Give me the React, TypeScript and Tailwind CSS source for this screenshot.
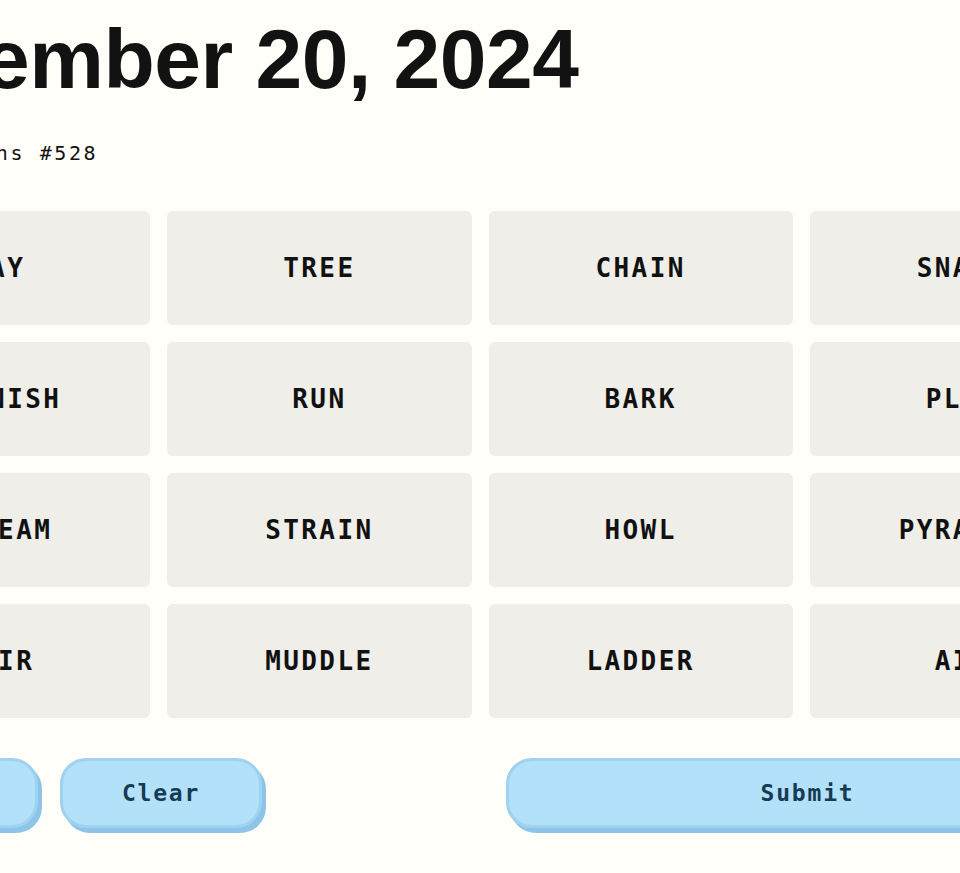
const words = [
  "BAY", "TREE", "CHAIN", "SNARL",
  "GARNISH", "RUN", "BARK", "PLAY",
  "STREAM", "STRAIN", "HOWL", "PYRAMID",
  "STIR", "MUDDLE", "LADDER", "AIR",
];

function PillButton({ label, className }: { label: string; className: string }) {
  return (
    <button
      className={`h-[70px] shrink-0 rounded-[26px] border-[3px] border-[#9fd1f0] bg-[#b3e1fa] shadow-[4px_5px_0_#8dc5e8] text-[23px] font-bold tracking-[1.8px] text-[#173a55] ${className}`}
      style={{ fontFamily: '"DejaVu Sans Mono", "Liberation Mono", monospace' }}
    >
      {label}
    </button>
  );
}

export default function App() {
  return (
    <div className="min-h-screen w-full overflow-hidden bg-[#fffef8] flex justify-center">
      <div className="w-[1268px] shrink-0 flex flex-col pt-[17px]">
        <h1
          className="text-[84px] leading-none font-bold tracking-[-0.5px] text-[#121212] -ml-[43px] whitespace-nowrap"
          style={{ fontFamily: '"Liberation Sans", Arial, sans-serif' }}
        >
          September 20, 2024
        </h1>
        <p
          className="mt-[40px] ml-[18px] text-[20px] leading-6 tracking-[2.6px] text-[#121212]"
          style={{ fontFamily: '"DejaVu Sans Mono", "Liberation Mono", monospace' }}
        >
          Connections #528
        </p>

        <div className="mt-[46px] grid grid-cols-4 gap-[17px]">
          {words.map((w) => (
            <div
              key={w}
              className="h-[114px] rounded-[6px] bg-[#efeee9] flex items-center justify-center text-[26px] font-bold tracking-[2.4px] text-[#111]"
              style={{ fontFamily: '"DejaVu Sans Mono", "Liberation Mono", monospace' }}
            >
              {w}
            </div>
          ))}
        </div>

        <div className="mt-[40px] flex items-start">
          <PillButton label="Shuffle" className="w-[192px]" />
          <PillButton label="Clear" className="ml-[22px] w-[202px]" />
          <PillButton label="Submit" className="ml-auto mr-[5px] w-[603px]" />
        </div>
      </div>
    </div>
  );
}
